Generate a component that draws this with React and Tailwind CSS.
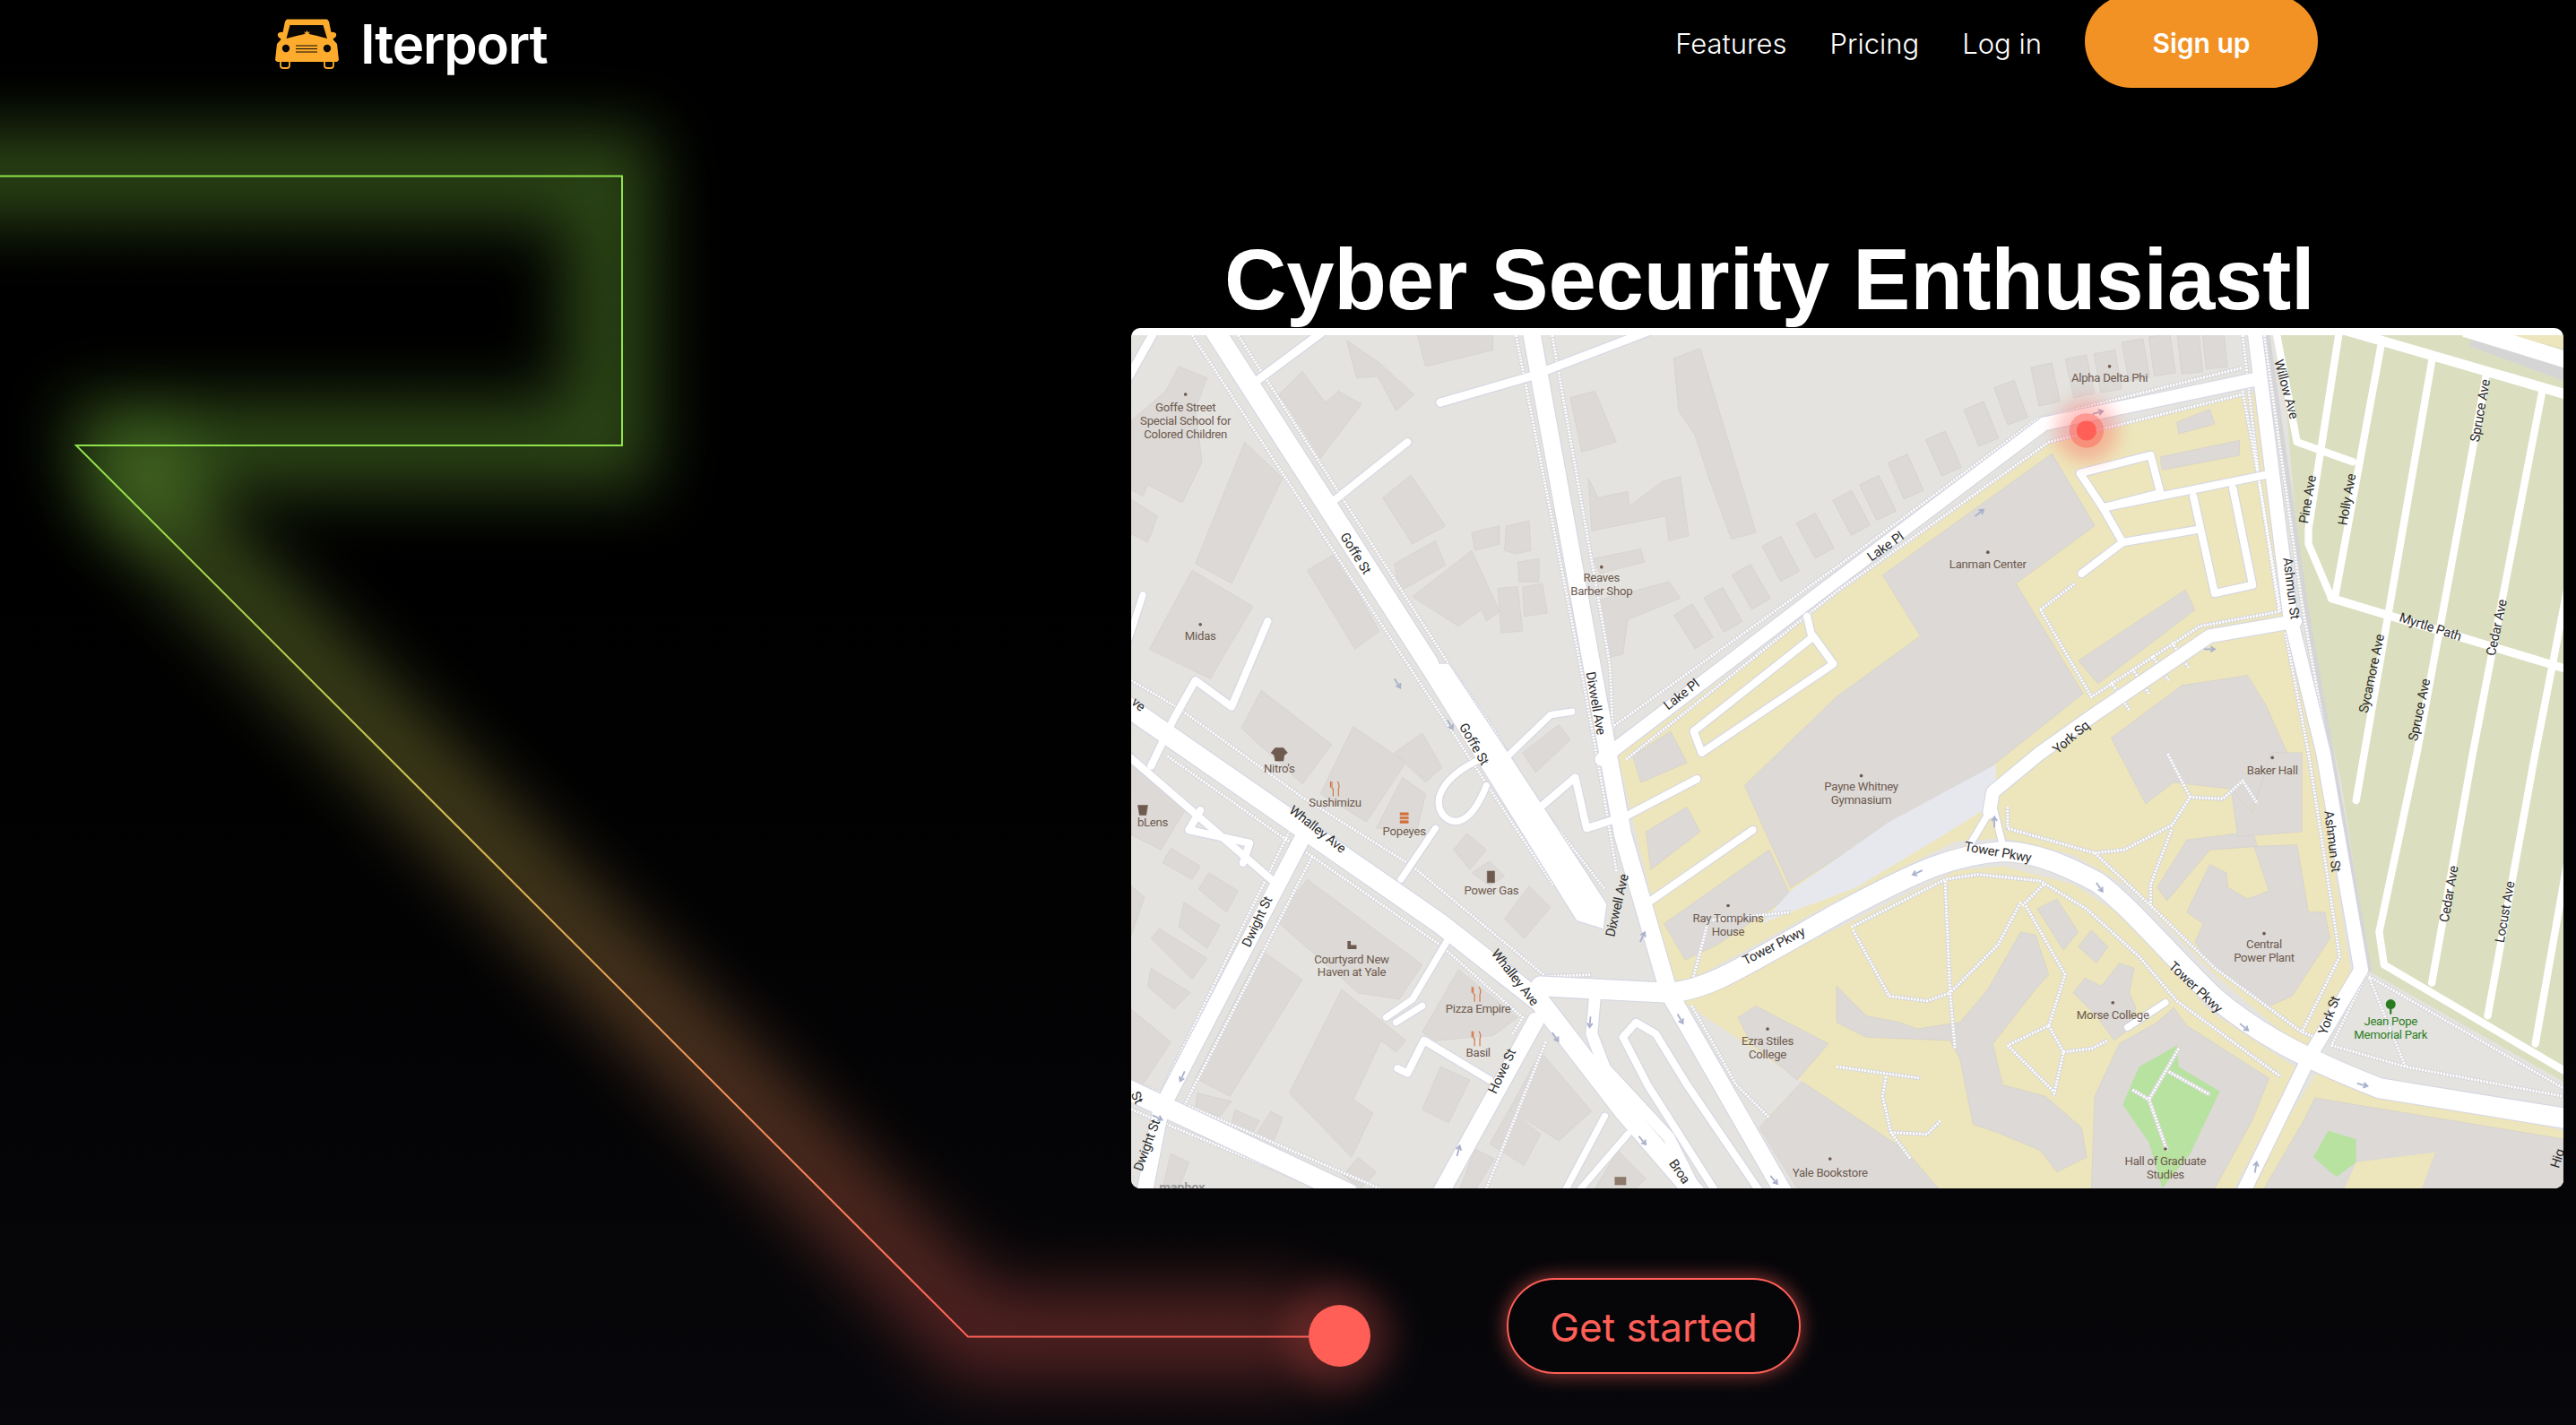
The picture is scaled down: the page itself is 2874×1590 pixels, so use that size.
import React from 'react'

// map geometry is in the coordinates of the shrunk reference: viewBox 689 204 871 519
const LAND = '#e4e3df'
const BUILDING = '#dcd9d6'

const campus = [
  '985,460 1118,362 1250,268 1365,240 1378,238 1392,370 1412,470 1432,600 1405,642 1345,590 1296,540 1262,520 1219,510 1190,512 1118,548 1030,596 1018,600',
  '1024,609 1034,606 1118,565 1190,530 1219,527 1262,538 1296,560 1345,615 1398,650 1360,723 1094,723 1077,679 1097,658',
  '1412,650 1560,688 1560,723 1365,723',
  '1528,204 1560,204 1560,212',
]

const buildings = [
  '1249,276 1275,320 1227,355 1268,422 1210,468 1145,505 1090,540 1062,478 1118,424 1169,387 1146,350',
  '1077,517 1013,562 1026,584 1045,575 1060,565 1090,545',
  '994,460 1017,445 1027,464 999,476',
  '1002,506 1027,491 1035,506 1005,529',
  '1325,257 1345,249 1348,258 1326,264',
  '1315,278 1363,268 1363,277 1316,286',
  '1265,402 1330,359 1336,371 1277,416',
  '1019,218 1035,212 1069,324 1054,328 1040,290 1032,265 1022,250',
  '956,242 971,238 984,269 963,275',
  '967,291 973,303 991,299 992,308 1012,293 1023,290 1028,326 1016,329 1014,314 969,323',
  '970,340 999,334 1001,342 974,349',
  '974,365 1016,354 1023,364 991,377 988,398 980,400',
  '863,204 909,204 909,213 868,223',
  '820,207 840,221 861,240 850,250 839,229 826,230',
  '779,240 793,226 807,245 815,238 829,246 804,279 797,267',
  '718,223 735,230 728,249 732,281 720,306 699,295 696,302 689,298 689,256 710,238',
  '758,269 781,291 750,355 728,343',
  '689,304 705,314 699,330 689,325',
  '726,347 763,369 737,413 700,395',
  '796,347 813,337 840,384 825,395',
  '842,303 859,289 880,320 860,331',
  '849,343 874,329 880,344 852,360',
  '860,363 896,335 913,372 905,378 902,371 888,381',
  '896,324 913,320 913,331 898,335',
  '917,320 931,317 932,335 923,337 916,335',
  '924,342 937,340 937,354 925,354',
  '912,358 924,357 927,384 914,385',
  '927,357 939,355 942,373 928,375',
  '768,420 811,453 793,477 756,443',
  '824,442 856,464 832,500 804,483',
  '866,446 878,467 868,476 849,458',
  '854,473 868,483 863,504 838,504',
  '893,507 905,517 895,529 885,517',
  '907,524 916,533 907,539 896,531',
  '931,539 944,552 928,571 916,559',
  '927,458 949,441 956,450 935,470',
  '689,466 724,489 707,517 689,508',
  '713,516 731,527 726,535 708,525',
  '736,531 754,542 747,555 730,541',
  '721,549 743,563 735,577 718,564',
  '706,565 735,583 726,596 701,571',
  '701,589 725,604 715,614 699,600',
  '689,539 697,546 689,569',
  '689,614 713,634 696,660 689,657',
  '796,535 866,587 852,608 827,604 777,560',
  '768,578 793,596 749,667 728,656',
  '817,602 856,633 850,640 841,633 824,669 836,677 823,704 785,665',
  '888,590 924,619 909,630 874,633 866,628',
  '877,649 895,657 882,683 866,675',
  '938,640 969,676 949,694 919,675',
  '919,675 938,690 928,709 907,696',
  '898,699 910,705 899,723 889,723',
  '985,700 1002,717 996,723 971,723',
  '827,704 838,713 829,723 818,715',
  '752,675 767,682 760,694 750,684',
  '774,676 781,680 775,696 765,690',
  '713,702 724,707 718,723 708,723',
  '729,665 750,670 743,679 728,675',
  '1331,555 1345,526 1355,531 1356,540 1368,547 1381,542 1372,515 1398,514 1405,555 1415,555 1418,571 1395,606 1379,613 1389,619 1345,587 1336,573 1341,562',
  '1313,540 1331,511 1371,506 1374,515 1345,517 1319,548',
  '1285,449 1328,417 1368,411 1379,429 1392,458 1383,458 1370,495 1358,480 1323,476 1306,489',
  '1358,480 1371,495 1382,458 1401,458 1401,506 1362,509',
  '1240,553 1252,547 1265,567 1256,578',
  '1265,576 1273,566 1283,576 1276,586',
  '1262,604 1269,595 1279,600 1290,586 1299,589 1296,604 1300,613 1296,626 1287,633 1276,618',
  '1230,567 1239,569 1247,593 1239,602 1213,635 1219,660 1245,667 1267,686 1270,704 1252,713 1242,700 1216,689 1201,684 1193,644 1187,633 1136,631 1118,622 1118,600 1136,618 1156,622 1167,626 1193,622 1210,602',
  '1058,619 1069,612 1086,621 1113,635 1094,657 1083,648 1066,635',
  '1097,658 1160,700 1180,723 1094,723 1071,686',
  '1323,613 1331,624 1381,656 1371,681 1348,723 1273,723 1275,667 1290,635 1313,622',
  '1409,668 1560,693 1560,723 1378,723 1402,682',
]

const houses = [
  [1348, 212, -6], [1333, 215, -6], [1316, 216, -8], [1300, 219, -10], [1283, 226, -10], [1266, 229, -12],
  [1245, 234, -12], [1224, 245, -20], [1206, 258, -22], [1183, 276, -24], [1160, 290, -24], [1143, 303, -26],
  [1127, 312, -28], [1105, 326, -28], [1084, 340, -28], [1066, 357, -30], [1049, 371, -30], [1031, 381, -32],
]

const hatch = '1072,562 1090,542 1150,500 1215,465 1215,488 1180,510 1130,540 1090,555'

// [width, path]
const roads = [
  [12, 'M739 200 L870 404'],
  [10.5, 'M932 200 L969 404 L988 508 L1016 604 L1086 726'],
  [12, 'M685 429 L877 562 L938 610 L988 675 L1032 726'],
  [4.5, 'M685 458 L774 535'],
  [12, 'M685 662 L821 726'],
  [9.5, 'M793 510 L707 675 L697 726'],
  [10, 'M935 621 L877 726'],
  [12, 'M938 600 L1016 604 C1040 602 1058 590 1118 556 C1170 528 1190 520 1219 518 C1240 518 1262 529 1277 537 C1296 551 1320 580 1348 607 C1375 630 1405 645 1448 662 L1565 681'],
  [8, 'M975 462 L1118 353 L1244 258 L1372 231'],
  [5, 'M877 245 L932 229 L1008 200'],
  [5, 'M765 232 L808 200'],
  [4.5, 'M813 304 L857 269'],
  [4, 'M696 362 L687 390'],
  [4.5, 'M772 378 L750 430 L728 414 L715 437 L701 466'],
  [5, 'M704 200 L686 232'],
  [4.5, 'M731 493 L724 505 L761 513 L757 525'],
  [4, 'M874 504 L853 535'],
  [4, 'M901 462 C880 472 872 485 878 495 C884 503 895 503 905 478'],
  [4, 'M918 460 L944 435 L957 433'],
  [4.5, 'M938 491 L959 473 L966 504 L991 496 L1033 474'],
  [4.5, 'M1005 548 L1067 505'],
  [4.5, 'M1100 375 L1103 388 L1031 445 L1036 458 L1116 404 L1103 386'],
  [4, 'M882 571 L860 608 L844 619'],
  [4, 'M866 612 L850 622'],
  [4.5, 'M851 650 L857 653 L867 633 L907 657'],
  [7, 'M971 606 L969 629 L977 650 L1016 692 L1033 726'],
  [4.5, 'M1072 726 L1027 660 L1008 629 L996 622 L988 631 L1003 660 L1045 726'],
  [4, 'M977 679 L952 726'],
  [4, 'M991 690 L960 726'],
  [8.5, 'M1372 200 L1394 376 L1414 458 L1437 590 L1405 644 L1365 726'],
  [4.5, 'M1266 288 L1309 277 L1315 300 L1280 309 L1266 288'],
  [4.5, 'M1280 309 L1292 330 L1267 349'],
  [4.5, 'M1292 330 L1339 322'],
  [4.5, 'M1280 309 L1379 289'],
  [4.5, 'M1335 302 L1348 361 L1371 356 L1359 297'],
  [8, 'M1397 378 L1345 387 L1273 436 L1242 458 L1213 482 L1211 494'],
  [4, 'M1211 494 L1199 514 M1213 490 L1219 514'],
  [4, 'M1318 610 L1295 625'],
]

const greenRoads = [
  [4.5, 'M1385 200 L1398 269 L1432 281'],
  [4.5, 'M1424 200 L1405 322 L1405 331 L1419 364'],
  [4.5, 'M1449 211 L1421 364'],
  [4.5, 'M1480 220 L1439 458 L1434 487'],
  [4.5, 'M1513 229 L1471 458 L1448 567 L1451 587 L1565 654'],
  [4.5, 'M1547 239 L1505 458 L1480 598'],
  [4.5, 'M1565 345 L1543 458 L1514 618'],
  [4.5, 'M1565 510 L1543 635'],
  [6, 'M1424 200 L1565 241'],
  [5, 'M1419 364 L1565 408'],
]

const walks = [
  'M726 204 L857 404 L946 539',
  'M754 204 L882 404 L910 445 L935 487 L977 541',
  'M923 204 L962 404 L977 487 L984 530',
  'M945 204 L980 404 L984 487 L988 520',
  'M975 447 L1118 345 L1240 255 L1364 224',
  'M990 462 L1118 360 L1247 269 L1365 240',
  'M689 414 L718 431 L793 485 L860 527 L941 594 L969 593',
  'M711 460 L782 510 L799 521 L877 575 L927 619 L921 629',
  'M786 504 L707 665',
  'M799 521 L721 673',
  'M941 634 L905 723',
  'M689 658 L707 665',
  'M724 673 L840 723',
  'M689 675 L804 723',
  'M1365 204 L1375 293 L1387 371',
  'M1391 385 L1405 458 L1424 582 L1401 628',
  'M1378 204 L1401 367 L1417 458 L1439 591',
  'M1440 593 L1560 662',
  'M1442 595 L1464 649',
  'M1419 636 L1464 649 L1560 667',
  'M1440 593 L1419 636',
  'M1242 371 L1263 355',
  'M1242 371 L1273 424 L1339 381 L1388 372 L1375 293 L1365 238',
  'M1285 415 L1296 432 M1298 407 L1308 422 M1310 399 L1320 414 M1322 391 L1332 406',
  'M1127 564 L1184 535 L1204 532 L1242 536 L1270 553 L1302 582 L1325 609 L1388 655',
  'M1231 551 L1244 538',
  'M1230 549 L1216 575 L1187 604',
  'M1184 536 L1187 604 L1190 638',
  'M1128 566 L1150 606 L1173 609 L1187 604',
  'M1233 551 L1257 593 L1247 624 L1222 636',
  'M1247 624 L1256 640 L1250 667',
  'M1222 636 L1250 664',
  'M1256 640 L1273 638 L1283 633',
  'M1326 638 L1308 669 L1319 700',
  'M1320 652 L1345 666',
  'M1298 663 L1308 669',
  'M1118 649 L1169 656',
  'M1148 655 L1146 667 L1151 689 L1163 705',
  'M1151 689 L1173 690 L1181 682',
  'M1222 491 L1222 504 L1275 519 L1293 517 L1322 502 L1333 485 L1353 486 L1365 475 L1374 489',
  'M1333 485 L1319 458',
  'M1275 519 L1309 551 L1348 589 L1401 628 L1414 633',
  'M1309 551 L1309 538 L1322 504',
  'M1030 598 L1040 560 L1090 555',
  'M1030 612 L1057 660 L1077 680',
]

const arrows = [
  [1205, 312, -38], [1277, 251, -15], [1345, 395, 0], [851, 416, 58], [883, 441, 60],
  [1000, 570, -65], [968, 622, 95], [1023, 620, 60], [947, 631, 55], [720, 655, 115], [705, 680, 25],
  [1167, 531, 155], [1278, 540, 55], [1366, 625, 40], [1438, 660, 15], [1214, 500, -90], [1373, 710, -80],
  [1000, 694, 50], [888, 700, -75], [1080, 718, 50],
]

const streets = [
  ['Goffe St', 825, 337, 58], ['Goffe St', 897, 453, 60], ['Dixwell Ave', 971, 428, 80], ['Dixwell Ave', 985, 551, -77],
  ['Lake Pl', 1148, 333, -35], ['Lake Pl', 1024, 423, -38], ['Ashmun St', 1394, 358, 83], ['Ashmun St', 1419, 512, 83],
  ['York St', 1418, 618, -70], ['Tower Pkwy', 1216, 519, 10], ['Tower Pkwy', 1080, 576, -27], ['Tower Pkwy', 1336, 601, 43],
  ['York Sq', 1261, 449, -40], ['Whalley Ave', 802, 505, 38], ['Whalley Ave', 922, 595, 52], ['Howe St', 915, 652, -65],
  ['Dwight St', 766, 561, -65], ['Dwight St', 699, 697, -70], ['Broa', 1022, 713, 55], ['St', 692, 668, 65], ['ve', 693, 429, 40],
  ['Willow Ave', 1391, 237, 75], ['Pine Ave', 1405, 304, -80], ['Holly Ave', 1429, 304, -80], ['Spruce Ave', 1510, 250, -80],
  ['Myrtle Path', 1479, 382, 18], ['Sycamore Ave', 1444, 410, -78], ['Spruce Ave', 1473, 432, -78], ['Cedar Ave', 1520, 382, -78],
  ['Cedar Ave', 1491, 544, -80], ['Locust Ave', 1525, 555, -80], ['Hig', 1557, 705, -72],
]

// dot x, dot y, label lines, first baseline
const places = [
  [722, 240, ['Goffe Street', 'Special School for', 'Colored Children'], 250.5],
  [731, 380, ['Midas'], 389.5],
  [975, 345, ['Reaves', 'Barber Shop'], 354],
  [1284, 223, ['Alpha Delta Phi'], 232.5],
  [1210, 336, ['Lanman Center'], 345.5],
  [1133, 472, ['Payne Whitney', 'Gymnasium'], 481],
  [1052, 551, ['Ray Tompkins', 'House'], 561],
  [1076, 626, ['Ezra Stiles', 'College'], 636],
  [1286, 610, ['Morse College'], 620],
  [1383, 461, ['Baker Hall'], 471],
  [1378, 568, ['Central', 'Power Plant'], 577],
  [1318, 699, ['Hall of Graduate', 'Studies'], 709],
  [1114, 705, ['Yale Bookstore'], 716],
]

const fork = (x, y) => `M${x - 2} ${y - 4.5} V${y - 1} Q${x - 2} ${y} ${x - 1.2} ${y} V${y + 4.5} M${x - 2.8} ${y - 4.5} V${y - 1} M${x + 1.5} ${y - 4.5} Q${x + 3} ${y - 2} ${x + 2} ${y} V${y + 4.5}`

const pois = [
  ["Nitro's", 779, 470, '#6e5a4f', 'M776.5 455 L781.5 455 L784 458 L782 459.5 L781.5 463 L776.5 463 L776 459.5 L774 458 Z', 0.3],
  ['Sushimizu', 813, 491, '#d2703a', fork(813, 480), 0.6],
  ['Popeyes', 855, 508, '#d2703a', 'M852.5 494.5 H857.5 V496 H852.5 Z M852.5 497 H857.5 V498.3 H852.5 Z M852.5 499.3 H857.5 V500.8 H852.5 Z', 0.3],
  ['Power Gas', 908, 544, '#6e5a4f', 'M905.5 530 H910 V537 H905.5 Z', 0.3],
  ['bLens', 702, 503, '#6e5a4f', 'M693 490 H699 L698 496 H694 Z', 0.3],
  ['Pizza Empire', 900, 616, '#d2703a', fork(899, 605), 0.6],
  ['Basil', 900, 643, '#d2703a', fork(899, 632), 0.6],
]

const labelStyle = { fontFamily: 'Roboto, sans-serif', letterSpacing: '-0.15px' }

const MapDrawing = () => (
  <svg viewBox="689 204 871 519" className="block w-full h-full" style={labelStyle}>
    <rect x="689" y="204" width="871" height="519" fill={LAND} />
    <polygon points="1388,204 1560,204 1560,658 1442,591 1425,476 1402,376" fill="#dbdfc0" />
    {campus.map((p, i) => <polygon key={i} points={p} fill="#ede5bb" />)}
    {buildings.map((p, i) => <polygon key={i} points={p} fill={BUILDING} stroke="#d4d1cd" strokeWidth="0.4" />)}
    {houses.map(([x, y, a], i) => (
      <rect key={i} x={x - 6.5} y={y - 12} width="13" height="24" fill={BUILDING} stroke="#d4d1cd" strokeWidth="0.4" transform={`rotate(${a} ${x} ${y})`} />
    ))}
    <polygon points="1325,636 1326,649 1351,664 1333,702 1316,723 1308,695 1292,672 1302,649" fill="#b8e2a0" />
    <polygon points="1417,688 1434,693 1434,707 1422,716 1408,704" fill="#b8e2a0" />
    <polygon points="1434,707 1482,701 1474,723 1427,723" fill="#ede5bb" />
    <polygon points={hatch} fill="#e6e8ee" />
    <path d="M1380 204 L1403 367 L1419 458 L1442 591" fill="none" stroke="#d5d5d6" strokeWidth="3" />
    <path d="M1505 204 L1565 226" fill="none" stroke="#d5d5d6" strokeWidth="14" />
    <path d="M1500 200 L1565 220" fill="none" stroke="#ffffff" strokeWidth="10" />

    <g fill="none" strokeLinejoin="round">
      {walks.map((d, i) => <path key={i} d={d} stroke="#d8d8dc" strokeWidth="2.6" />)}
      {walks.map((d, i) => <path key={i} d={d} stroke="#ffffff" strokeWidth="1.6" strokeDasharray="1.1 0.8" />)}
      {roads.map(([w, d], i) => <path key={i} d={d} stroke="#d4d6e3" strokeWidth={w + 1.2} strokeLinecap="round" />)}
      <polygon points="863,404 882,404 918,458 978,550 976,565 960,560" fill="#d4d6e3" stroke="#d4d6e3" strokeWidth="1.2" />
      {greenRoads.map(([w, d], i) => <path key={i} d={d} stroke="#ffffff" strokeWidth={w} strokeLinecap="round" />)}
      {roads.map(([w, d], i) => <path key={i} d={d} stroke="#ffffff" strokeWidth={w} strokeLinecap="round" />)}
      <polygon points="863,404 882,404 918,458 978,550 976,565 960,560" fill="#ffffff" />
    </g>

    {arrows.map(([x, y, a], i) => (
      <path key={i} d="M-3.5 0 H2.5 M0.5 -1.6 L3 0 L0.5 1.6" fill="none" stroke="#a9b1cb" strokeWidth="1" transform={`translate(${x} ${y}) rotate(${a})`} />
    ))}

    {streets.map(([t, x, y, a], i) => (
      <text key={i} x={x} y={y} fontSize="8" fill="#2b2b2b" textAnchor="middle" dominantBaseline="middle" transform={`rotate(${a} ${x} ${y})`}>{t}</text>
    ))}

    {places.map(([x, y, lines, base], i) => (
      <g key={i} fill="#6e5a4f" fontSize="7.2" textAnchor="middle">
        <circle cx={x} cy={y} r="1" />
        {lines.map((l, j) => <text key={j} x={x} y={base + j * 8.2}>{l}</text>)}
      </g>
    ))}

    {pois.map(([t, x, y, c, d, sw], i) => (
      <g key={i}>
        <path d={d} fill={sw > 0.5 ? 'none' : c} stroke={c} strokeWidth={sw} />
        <text x={x} y={y} fontSize="7.2" fill="#6e5a4f" textAnchor="middle">{t}</text>
      </g>
    ))}
    <g fill="#6e5a4f" fontSize="7.2" textAnchor="middle">
      <path d="M820.5 572.5 V577.5 H826 V575 H822.5 V572.5 Z" />
      <text x="823" y="586">Courtyard New</text>
      <text x="823" y="594">Haven at Yale</text>
    </g>
    <path d="M1455 609 V617" stroke="#2a7d1e" strokeWidth="1.2" />
    <circle cx="1455" cy="611" r="3" fill="#2a7d1e" />
    <g fill="#2a7d1e" fontSize="7.2" textAnchor="middle">
      <text x="1455" y="624">Jean Pope</text>
      <text x="1455" y="632">Memorial Park</text>
    </g>
    <rect x="983" y="716" width="7" height="5" fill="#8d7a6c" />
    <text x="706" y="725" fontSize="8" fontWeight="700" fill="#9a9a9a">mapbox</text>

    <circle cx="1270" cy="262" r="19" fill="#ff5f57" opacity="0.35" style={{ filter: 'blur(5px)' }} />
    <circle cx="1270" cy="262" r="10.5" fill="#ff5f57" opacity="0.45" />
    <circle cx="1270" cy="262" r="6" fill="#ff5f57" />
  </svg>
)

const TRACE = 'M-10 196.5 H694 V497 H85 L1080 1491.5 H1470'
const GLOW = 'M-100 196 H680 V497 H130 L135 530 L1090 1488 H1470'

const Trace = () => (
  <svg className="absolute top-0 left-0 w-[2874px] h-[1590px]" viewBox="0 0 2874 1590">
    <defs>
      <linearGradient id="trace" gradientUnits="userSpaceOnUse" x1="0" y1="497" x2="0" y2="1492">
        <stop offset="0" stopColor="#8fe34a" />
        <stop offset="0.35" stopColor="#c9c450" />
        <stop offset="0.7" stopColor="#f3985a" />
        <stop offset="1" stopColor="#ff5f57" />
      </linearGradient>
      <filter id="glow" filterUnits="userSpaceOnUse" x="-300" y="-200" width="2600" height="2000">
        <feGaussianBlur stdDeviation="36" />
      </filter>
    </defs>
    <path d={GLOW} fill="none" stroke="url(#trace)" strokeWidth="100" opacity="0.3" filter="url(#glow)" />
    <ellipse cx="165" cy="535" rx="60" ry="70" fill="#8fe34a" opacity="0.18" filter="url(#glow)" />
    <path d={TRACE} fill="none" stroke="url(#trace)" strokeWidth="2" />
    <circle cx="1494.5" cy="1490.5" r="60" fill="#ff5f57" opacity="0.25" style={{ filter: 'blur(18px)' }} />
    <circle cx="1494.5" cy="1490.5" r="34.5" fill="#ff5f57" />
  </svg>
)

const Logo = () => (
  <svg viewBox="0 0 71 56" className="w-[71px] h-[56px]">
    <path fill="#fdab2c" d="M13 0.5 H58 L60 3 L62.5 15 Q66 14 68 16.5 Q69 20 65 22 L64.5 23 L69 28 L71 46 L69 48 H2 L0 46 L2 28 L6.5 23 L6 22 Q2 20 3 16.5 Q5 14 8.5 15 L11 3 Z" />
    <path fill="#090806" d="M16.5 7 H53.5 L58 22 Q48 19 38 17 H33 Q23 19 12.5 22 Z" />
    <path fill="#fdab2c" d="M32 14 L34 15.5 L35.5 13 L37 15.5 L39 14 L37 18 H34 Z" />
    <circle cx="12" cy="33" r="4.2" fill="#090806" />
    <circle cx="58" cy="33" r="4.2" fill="#090806" />
    <path d="M23 30 H47 M23 33.5 H47 M23 37 H47" stroke="#090806" strokeWidth="1.2" />
    <path d="M6 48 V52 Q6 55 9 55 H13 Q16 55 16 52 V48 M55 48 V52 Q55 55 58 55 H62 Q65 55 65 52 V48" fill="none" stroke="#fdab2c" strokeWidth="1.8" />
  </svg>
)

const App = () => {
  return (
    <div className="relative w-[2874px] h-[1590px] overflow-hidden bg-gradient-to-b from-black to-[#08080c] font-['Inter',sans-serif] text-white">
      <Trace />
      <div className="relative">
        <nav className="flex items-center justify-between h-[104px] -mt-[6px] pl-[307px] pr-[288px]">
          <div className="flex items-center gap-[24px] pt-[6px]">
            <Logo />
            <span className="text-[60px] font-semibold tracking-[-0.02em] leading-none">Iterport</span>
          </div>
          <div className="flex items-center">
            <a className="text-[31px] font-light mr-[48px] pt-[6px]">Features</a>
            <a className="text-[31px] font-light mr-[48px] pt-[6px]">Pricing</a>
            <a className="text-[31px] font-light mr-[48px] pt-[6px]">Log in</a>
            <button className="w-[260px] h-[104px] rounded-[52px] bg-[#f29224] pt-[4px] text-[30px] font-semibold">Sign up</button>
          </div>
        </nav>

        <main className="ml-[1262px] mr-[14px]">
          <h1 className="mt-[166px] mb-[6px] pl-[104px] font-['Liberation_Sans',sans-serif] font-bold text-[96px] tracking-[-0.2px] leading-none whitespace-nowrap">
            Cyber Security Enthusiastl
          </h1>
          <div className="bg-white rounded-[10px] pt-[8px] h-[960px] overflow-hidden">
            <MapDrawing />
          </div>
        </main>

        <div className="mt-[100px] ml-[1681px]">
          <button className="w-[328px] h-[107px] rounded-[54px] border-2 border-[#ff5f57] bg-[#060609] pt-[2px] text-[#ff5f57] text-[44px] shadow-[0_0_22px_rgba(255,95,87,0.6)]">
            Get started
          </button>
        </div>
      </div>
    </div>
  )
}

export default App
